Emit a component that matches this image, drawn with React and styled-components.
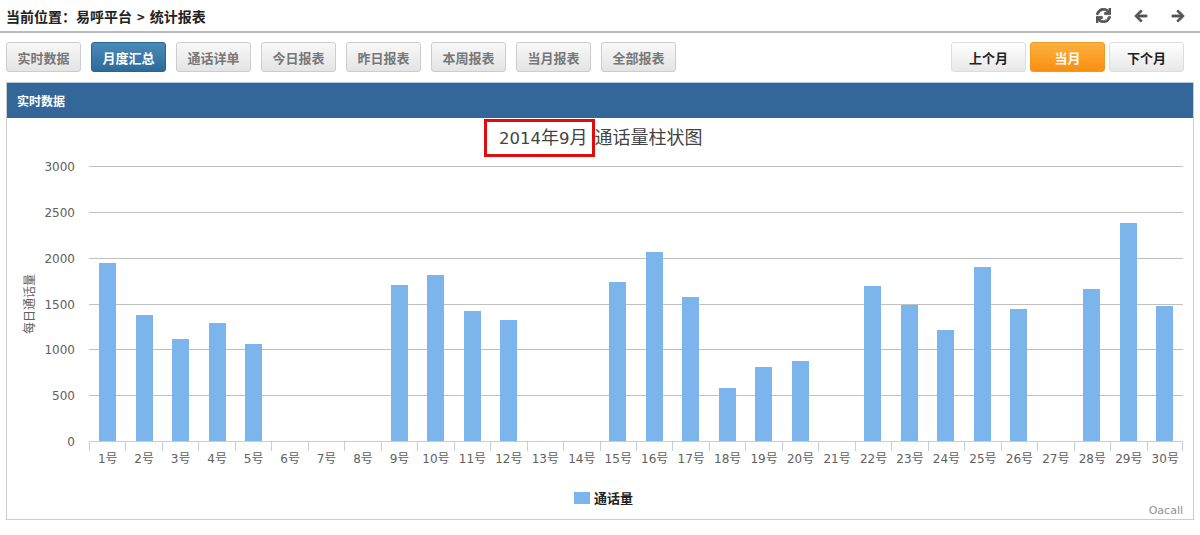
import styled, { createGlobalStyle } from "styled-components";
import { FaSync, FaArrowLeft, FaArrowRight } from "react-icons/fa";

const tabs = ["实时数据", "月度汇总", "通话详单", "今日报表", "昨日报表", "本周报表", "当月报表", "全部报表"];
const values = [1942, 1375, 1113, 1287, 1058, 0, 0, 0, 1702, 1811, 1418, 1320, 0, 0, 1735, 2062, 1571, 578, 807, 873, 0, 1691, 1484, 1211, 1898, 1440, 0, 1658, 2378, 1473];
const ticks = [0, 500, 1000, 1500, 2000, 2500, 3000];

const CJK = `"Noto Sans CJK SC", "Liberation Sans", sans-serif`;
const LATIN = `"DejaVu Sans", "Noto Sans CJK SC", sans-serif`;
const LEFT = 82;
const RIGHT = 1176;
const STEP = (RIGHT - LEFT) / 30;
const BASE = 323;
const yOf = (v) => BASE - (v / 3000) * 275;

const Chart = () => (
  <ChartSvg viewBox="0 0 1186 400" width="1186" height="400">
    <text x="492" y="26" fill="#444" fontFamily={CJK} fontSize="18">
      <tspan fontFamily={LATIN} fontSize="16.5">2014</tspan>年<tspan fontFamily={LATIN} fontSize="16.5">9</tspan>月<tspan dx="7">通话量柱状图</tspan>
    </text>
    {ticks.map((t) => (
      <g key={t}>
        {t > 0 && <line x1={LEFT} x2={RIGHT} y1={Math.round(yOf(t)) + 0.5} y2={Math.round(yOf(t)) + 0.5} stroke="#c0c0c0" />}
        <text x="68" y={yOf(t) + 5} textAnchor="end" fill="#606060" fontFamily={LATIN} fontSize="12">{t}</text>
      </g>
    ))}
    <text transform="translate(27 186) rotate(-90)" textAnchor="middle" fill="#606060" fontFamily={CJK} fontSize="12">每日通话量</text>
    {values.map((v, i) => v > 0 && (
      <rect key={i} x={Math.round(92.2 + 36.44 * i)} y={Math.round(yOf(v))} width="17" height={BASE - Math.round(yOf(v))} fill="#7cb5ec" />
    ))}
    <line x1={LEFT} x2={RIGHT} y1={BASE + 0.5} y2={BASE + 0.5} stroke="#c0d0e0" />
    {values.map((_, i) => (
      <line key={i} x1={Math.round(LEFT + STEP * i) + 0.5} x2={Math.round(LEFT + STEP * i) + 0.5} y1={BASE} y2={BASE + 10} stroke="#c0d0e0" />
    ))}
    <line x1={RIGHT - 0.5} x2={RIGHT - 0.5} y1={BASE} y2={BASE + 10} stroke="#c0d0e0" />
    {values.map((_, i) => (
      <text key={i} x={LEFT + STEP * (i + 0.5) + 0.5} y={BASE + 22} textAnchor="middle" fill="#606060" fontFamily={LATIN} fontSize="12">{i + 1}号</text>
    ))}
    <rect x="567" y="374" width="16" height="12" fill="#7cb5ec" />
    <text x="587" y="385" fill="#222" fontFamily={CJK} fontSize="13" fontWeight="700">通话量</text>
    <text x="1176" y="396" textAnchor="end" fill="#909090" fontFamily={LATIN} fontSize="11">Oacall</text>
  </ChartSvg>
);

const App = () => (
  <Page>
    <GlobalStyle />
    <TopBar>
      <Crumb>当前位置：易呼平台<Sep>&gt;</Sep>统计报表</Crumb>
      <TopIcons>
        <FaSync size={15} />
        <FaArrowLeft size={14} />
        <FaArrowRight size={14} />
      </TopIcons>
    </TopBar>
    <Toolbar>
      <TabGroup>
        {tabs.map((t) => (
          <TabButton key={t} $active={t === "月度汇总"}>{t}</TabButton>
        ))}
      </TabGroup>
      <MonthGroup>
        <MonthButton>上个月</MonthButton>
        <MonthButton $current>当月</MonthButton>
        <MonthButton>下个月</MonthButton>
      </MonthGroup>
    </Toolbar>
    <Panel>
      <PanelHead>实时数据</PanelHead>
      <PanelBody>
        <Chart />
        <RedMark />
      </PanelBody>
    </Panel>
  </Page>
);

export default App;

const GlobalStyle = createGlobalStyle`
  html, body {
    margin: 0;
    background: #fff;
    font-family: "Noto Sans CJK SC", "Liberation Sans", sans-serif;
  }
`;

const Page = styled.div`
  width: 1200px;
  height: 535px;
  overflow: hidden;
`;

const TopBar = styled.div`
  height: 33px;
  box-sizing: border-box;
  border-bottom: 2px solid #bbb;
  display: flex;
  align-items: center;
  justify-content: space-between;
  padding: 0 15px 0 6px;
`;

const Crumb = styled.div`
  font-size: 14px;
  font-weight: 700;
  color: #222;
`;

const Sep = styled.span`
  margin: 0 5px;
  font-size: 13px;
`;

const TopIcons = styled.div`
  display: flex;
  align-items: center;
  gap: 23px;
  color: #555;

  svg {
    stroke: currentColor;
    stroke-width: 28px;
  }
`;

const Toolbar = styled.div`
  display: flex;
  justify-content: space-between;
  padding: 9px 16px 10px 6px;
`;

const TabGroup = styled.div`
  display: flex;
  gap: 10px;
`;

const MonthGroup = styled.div`
  display: flex;
  gap: 4px;
`;

const BaseButton = styled.div`
  width: 75px;
  height: 30px;
  box-sizing: border-box;
  border-radius: 3px;
  display: flex;
  align-items: center;
  justify-content: center;
  font-size: 13px;
  font-weight: 700;
`;

const TabButton = styled(BaseButton)`
  color: ${(p) => (p.$active ? "#fff" : "#777")};
  border: 1px solid ${(p) => (p.$active ? "#2a6496" : "#ccc")};
  background: ${(p) => (p.$active ? "linear-gradient(#4a8ab8, #2d6a9a)" : "linear-gradient(#f8f8f8, #e4e4e4)")};
`;

const MonthButton = styled(BaseButton)`
  color: ${(p) => (p.$current ? "#fff" : "#222")};
  border: 1px solid ${(p) => (p.$current ? "#f09a20" : "#ddd")};
  background: ${(p) => (p.$current ? "linear-gradient(#fdb040, #f98f10)" : "linear-gradient(#fff, #e8e8e8)")};
`;

const Panel = styled.div`
  margin: 0 6px;
  height: 438px;
  box-sizing: border-box;
  border: 1px solid #ccc;
  border-top: 1px solid #b8c8d8;
`;

const PanelHead = styled.div`
  height: 35px;
  background: #336699;
  color: #fff;
  font-size: 12px;
  font-weight: 700;
  line-height: 35px;
  padding-left: 10px;
`;

const PanelBody = styled.div`
  position: relative;
  height: 400px;
`;

const ChartSvg = styled.svg`
  display: block;
`;

const RedMark = styled.div`
  position: absolute;
  left: 477px;
  top: 1px;
  width: 111px;
  height: 38px;
  box-sizing: border-box;
  border: 3px solid #e00d0d;
`;
